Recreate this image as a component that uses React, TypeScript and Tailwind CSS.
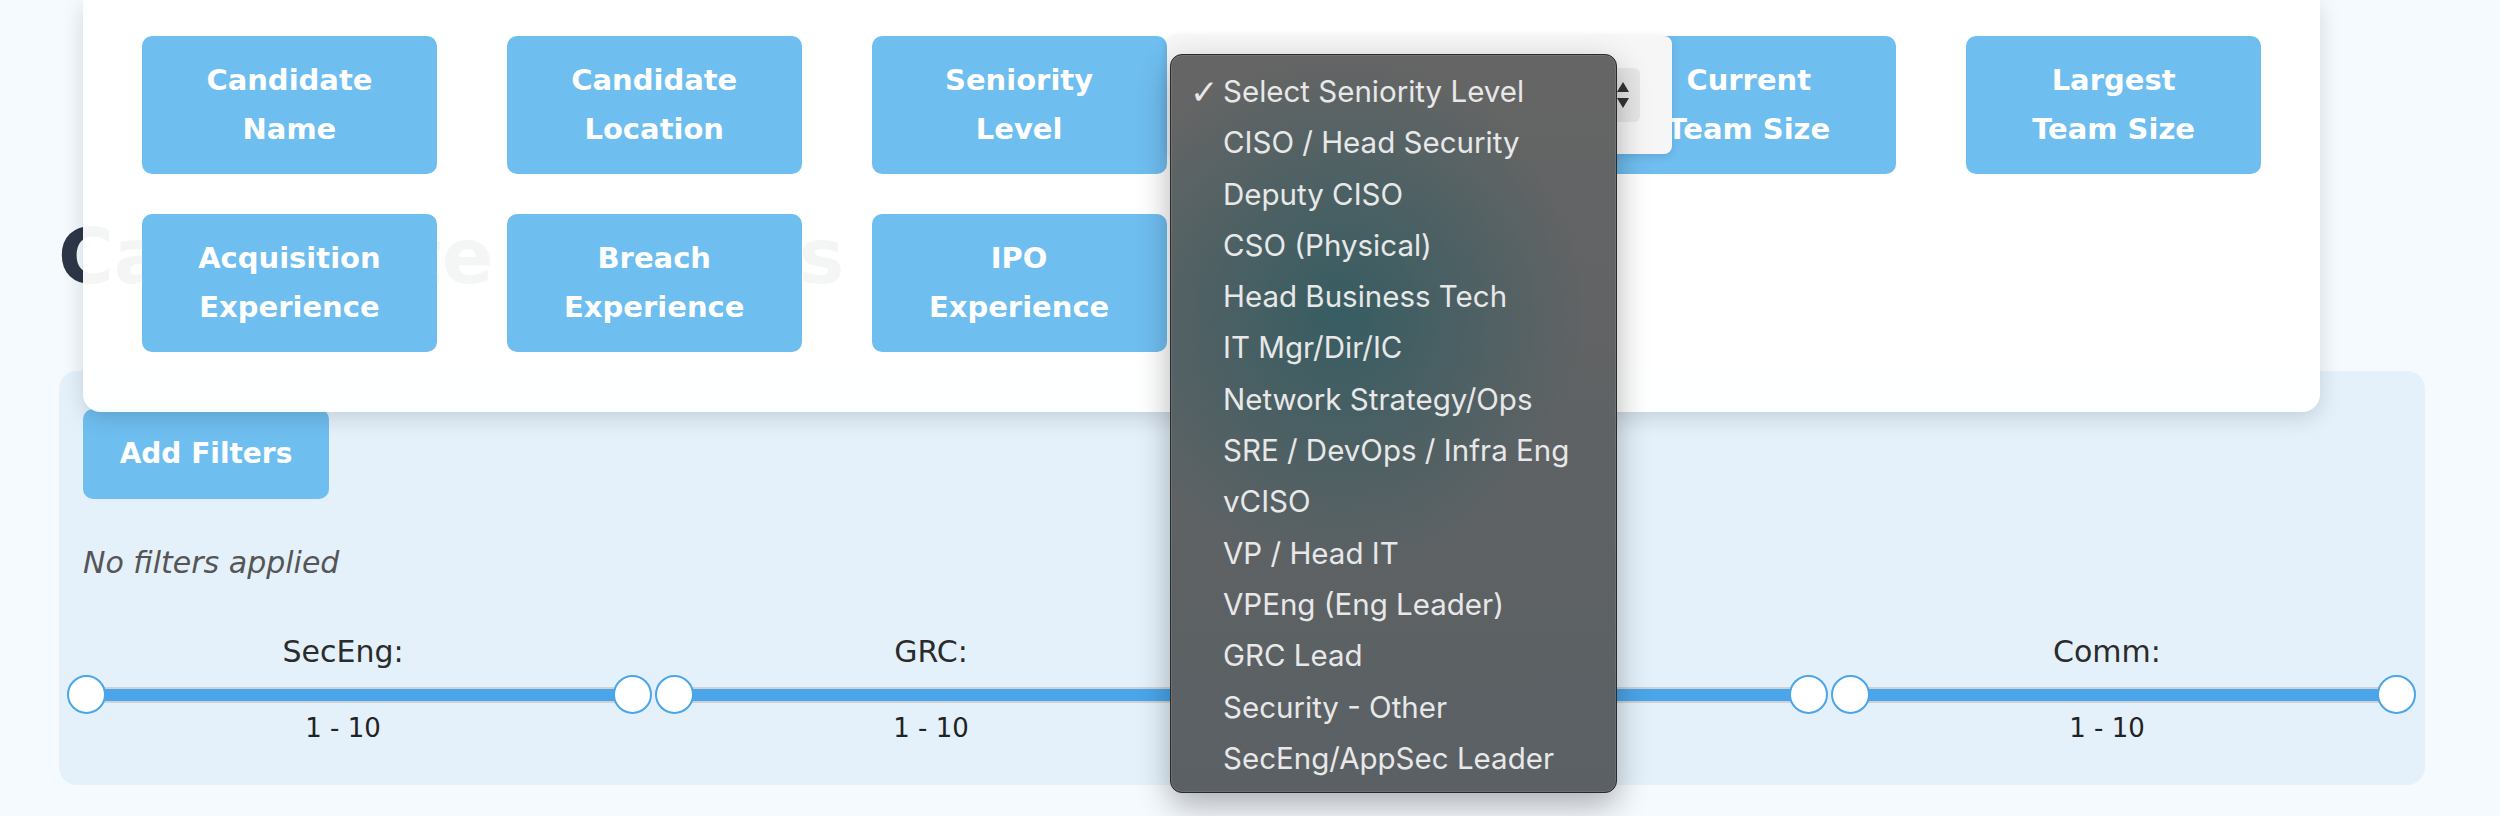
import React from 'react';

const fieldButtons: ([string, string] | null)[] = [
  ['Candidate', 'Name'],
  ['Candidate', 'Location'],
  ['Seniority', 'Level'],
  ['Years', 'Experience'],
  ['Current', 'Team Size'],
  ['Largest', 'Team Size'],
  ['Acquisition', 'Experience'],
  ['Breach', 'Experience'],
  ['IPO', 'Experience'],
  null,
  null,
  null,
];

const seniorityOptions = [
  'Select Seniority Level',
  'CISO / Head Security',
  'Deputy CISO',
  'CSO (Physical)',
  'Head Business Tech',
  'IT Mgr/Dir/IC',
  'Network Strategy/Ops',
  'SRE / DevOps / Infra Eng',
  'vCISO',
  'VP / Head IT',
  'VPEng (Eng Leader)',
  'GRC Lead',
  'Security - Other',
  'SecEng/AppSec Leader',
];

const sliders = ['SecEng:', 'GRC:', 'IT:', 'Comm:'];

const RangeSlider: React.FC<{ label: string }> = ({ label }) => (
  <div className="flex w-[585px] flex-col">
    <div className="h-[40px] pr-[33px] text-center text-[30px] leading-[40px] text-[#2b2b2b]">{label}</div>
    <div className="relative mt-[3px] flex h-[40px] items-center px-[19px]">
      <div className="flex h-[16px] flex-1 items-center bg-[#cfd1d3]">
        <div className="h-[12px] w-full bg-[#4aa5ea]" />
      </div>
      <span className="absolute left-0 top-0 h-[39px] w-[39px] rounded-full border-2 border-[#4aa5ea] bg-white" />
      <span className="absolute right-0 top-0 h-[39px] w-[39px] rounded-full border-2 border-[#4aa5ea] bg-white" />
    </div>
    <div className="-mt-px pr-[33px] text-center text-[26px] leading-[28px] text-[#222]">1 - 10</div>
  </div>
);

const App: React.FC = () => {
  return (
    <div className="relative h-[816px] w-full overflow-hidden bg-[#f5faff] font-['DejaVu_Sans',sans-serif]">
      {/* Page behind the modal */}
      <div className="pt-[219px]">
        <h1 className="ml-[58px] text-[76px] font-bold leading-none text-[#2d3748]">Candidate Profiles</h1>

        <div className="ml-[59px] mr-[75px] mt-[76px] rounded-[18px] bg-[#e4f1fb] pb-[43px] pt-[38px]">
          <button className="ml-[24px] h-[90px] w-[246px] rounded-[10px] bg-[#6fbef0] text-[28px] font-bold text-white">
            Add Filters
          </button>
          <p className="ml-[24px] mt-[44px] text-[30px] italic leading-[40px] text-[#555]">No filters applied</p>
          <div className="ml-[8px] mt-[49px] flex gap-[3px]">
            {sliders.map((s) => (
              <RangeSlider key={s} label={s} />
            ))}
          </div>
        </div>
      </div>

      {/* Field picker card */}
      <div className="absolute left-[83px] top-0 z-10 w-[2237px] rounded-b-[18px] bg-white/95 px-[59px] pb-[60px] pt-[36px] shadow-[0_6px_22px_rgba(0,0,0,0.14)]">
        <div className="grid grid-cols-6 gap-x-[70px] gap-y-[40px]">
          {fieldButtons.map((label, i) =>
            label ? (
              <button
                key={i}
                className="flex h-[138px] flex-col items-center justify-center rounded-[10px] bg-[#6fbef0] text-center text-[29px] font-bold leading-[49px] text-white"
              >
                <span>{label[0]}</span>
                <span>{label[1]}</span>
              </button>
            ) : (
              <div key={i} className="h-[138px]" />
            )
          )}
        </div>
      </div>

      {/* Native select */}
      <div className="absolute left-[1167px] top-[36px] z-20 h-[118px] w-[505px] rounded-[8px] bg-[#f6f6f6] shadow-[0_2px_10px_rgba(0,0,0,0.12)]">
        <div className="absolute right-[32px] top-[32px] flex h-[54px] w-[34px] flex-col items-center justify-center gap-[6px] rounded-[6px] bg-[#e7e7e7]">
          <span className="h-0 w-0 border-x-[6px] border-b-[10px] border-x-transparent border-b-[#333]" />
          <span className="h-0 w-0 border-x-[6px] border-t-[10px] border-x-transparent border-t-[#333]" />
        </div>
      </div>

      {/* Open dropdown menu */}
      <div className="absolute left-[1170px] top-[54px] z-30 h-[739px] w-[447px] rounded-[12px] border border-[#2a2a2a] bg-[#616263] bg-[radial-gradient(ellipse_55%_35%_at_38%_35%,rgba(50,92,98,0.9),rgba(50,92,98,0)),linear-gradient(180deg,#656565,#5a6064)] pt-[11px] shadow-[0_12px_32px_rgba(0,0,0,0.3),inset_0_0_0_1px_rgba(255,255,255,0.1)]">
        {seniorityOptions.map((opt, i) => (
          <div key={opt} className="relative pl-[52px] font-['Inter',sans-serif] text-[29.5px] leading-[51.3px] text-[#e8e8e8]">
            {i === 0 && (
              <span className="absolute left-[19px] top-[1px] font-['DejaVu_Sans',sans-serif] text-[34px] font-bold">✓</span>
            )}
            {opt}
          </div>
        ))}
      </div>
    </div>
  );
};

export default App;
